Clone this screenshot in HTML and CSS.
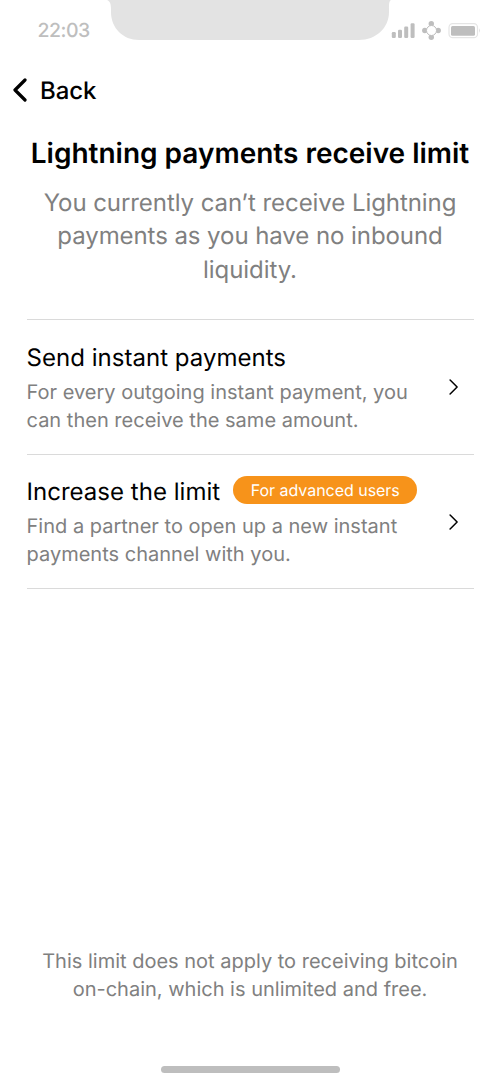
FILE: index.html
```html
<!DOCTYPE html>
<html lang="en">
<head>
<meta charset="utf-8">
<title>Lightning payments receive limit</title>
<link rel="stylesheet" href="styles.css">
</head>
<body>
<main class="screen">
  <header class="status">
    <span class="time">22:03</span>
    <svg class="notch" width="284" height="40" viewBox="0 0 284 40"><path d="M0 0C3 1 4 4 4 9V12C4 28 16 40 32 40H252C269 40 282 28 282 12V9C282 4 282 1 284 0Z" fill="#e3e3e3"/></svg>
    <svg class="indicators" width="90" height="20" viewBox="0 0 90 20">
      <g fill="#bebebe">
        <rect x="1.8" y="12" width="4" height="6" rx="1.2"/><rect x="8" y="9.8" width="4" height="8.2" rx="1.2"/><rect x="14.2" y="6.5" width="4" height="11.5" rx="1.2"/><rect x="20.6" y="3.3" width="4" height="14.7" rx="1.2"/>
        <circle cx="41.3" cy="3.8" r="2.7"/><circle cx="34.8" cy="10.5" r="2.7"/><circle cx="48.2" cy="10.5" r="2.7"/><circle cx="41.3" cy="17.2" r="2.7"/>
        <rect x="61" y="6" width="24" height="9.7" rx="1.5"/>
      </g>
      <circle cx="41.5" cy="10.5" r="5" fill="#fff" stroke="#bebebe" stroke-width="1"/>
      <rect x="59" y="3.7" width="28.5" height="14" rx="3.7" fill="none" stroke="#e5e5e5" stroke-width="1.2"/>
      <path d="M89 8.2Q90.7 10.5 89 12.8Z" fill="#e0e0e0"/>
    </svg>
  </header>
  <nav class="back">
    <svg width="16" height="24" viewBox="0 0 16 24"><path d="M13 2L3 12L13 22" fill="none" stroke="#000" stroke-width="3.2" stroke-linecap="round" stroke-linejoin="round"/></svg>
    <span>Back</span>
  </nav>
  <h1 class="title">Lightning payments receive limit</h1>
  <p class="intro">You currently can’t receive Lightning<br>payments as you have no inbound<br>liquidity.</p>
  <section class="options">
    <article class="option">
      <div>
        <h2 class="option-title"><span>Send instant payments</span></h2>
        <p class="description">For every outgoing instant payment, you<br>can then receive the same amount.</p>
      </div>
      <svg class="chevron" width="10" height="16" viewBox="0 0 10 16"><path d="M1.1 1L8.1 8L1.1 15" fill="none" stroke="#000" stroke-width="1.5" stroke-linecap="round" stroke-linejoin="round"/></svg>
    </article>
    <article class="option">
      <div>
        <h2 class="option-title"><span>Increase the limit</span><span class="badge">For advanced users</span></h2>
        <p class="description">Find a partner to open up a new instant<br>payments channel with you.</p>
      </div>
      <svg class="chevron" width="10" height="16" viewBox="0 0 10 16"><path d="M1.1 1L8.1 8L1.1 15" fill="none" stroke="#000" stroke-width="1.5" stroke-linecap="round" stroke-linejoin="round"/></svg>
    </article>
  </section>
  <footer class="footer">
    <p class="note">This limit does not apply to receiving bitcoin<br>on-chain, which is unlimited and free.</p>
    <div class="home"></div>
  </footer>
</main>
</body>
</html>
```
FILE: styles.css
```css
* { box-sizing: border-box; }
body, h1, h2, p { margin: 0; }
body { font-family: Inter, "Liberation Sans", sans-serif; background: #fff; color: #000; font-optical-sizing: none; text-rendering: geometricPrecision; }
.screen { width: 500px; height: 1083px; display: flex; flex-direction: column; overflow: hidden; white-space: nowrap; }
.status { height: 40px; flex: none; display: flex; }
.time { width: 107px; padding: 18px 0 0 37.5px; font-size: 19.5px; line-height: 25px; font-weight: 500; letter-spacing: -0.5px; color: #bebebe; }
.notch { flex: none; }
.indicators { flex: none; margin: 20px 0 0 -1px; }
.back { height: 60px; margin-top: 20px; padding-left: 12px; display: flex; align-items: center; gap: 12px; font-size: 24px; font-weight: 500; line-height: 30px; letter-spacing: -0.1px; }
.back span { padding-top: 1px; }
.title { margin-top: 14px; font-size: 28px; line-height: 38px; font-weight: 600; text-align: center; }
.intro { margin-top: 14px; font-size: 24px; line-height: 33.4px; letter-spacing: -0.07px; color: #808080; text-align: center; }
.options { margin: 32.8px 26.5px 0; border-top: 1px solid #dadada; }
.option { height: 134.5px; padding: 18.6px 15px 0 0; border-bottom: 1px solid #dadada; display: flex; justify-content: space-between; }
.option-title { height: 37px; display: flex; align-items: center; gap: 13px; font-size: 24px; font-weight: 400; line-height: 37px; letter-spacing: 0.03px; }
.description { margin-top: 2px; font-size: 20px; line-height: 28px; color: #808080; letter-spacing: 0.01px; }
.badge { height: 28px; width: 184px; border-radius: 14px; margin-top: -3.6px; background: #f7931a; color: #fff; font-size: 16px; line-height: 28px; letter-spacing: -0.03px; text-align: center; }
.chevron { margin-top: 40.4px; flex: none; }
.footer { margin-top: auto; display: flex; flex-direction: column; align-items: center; gap: 62.5px; padding-bottom: 10.5px; }
.note { font-size: 20px; line-height: 28px; color: #808080; text-align: center; }
.home { width: 179px; height: 7px; border-radius: 4px; background: #bebebe; }
```
